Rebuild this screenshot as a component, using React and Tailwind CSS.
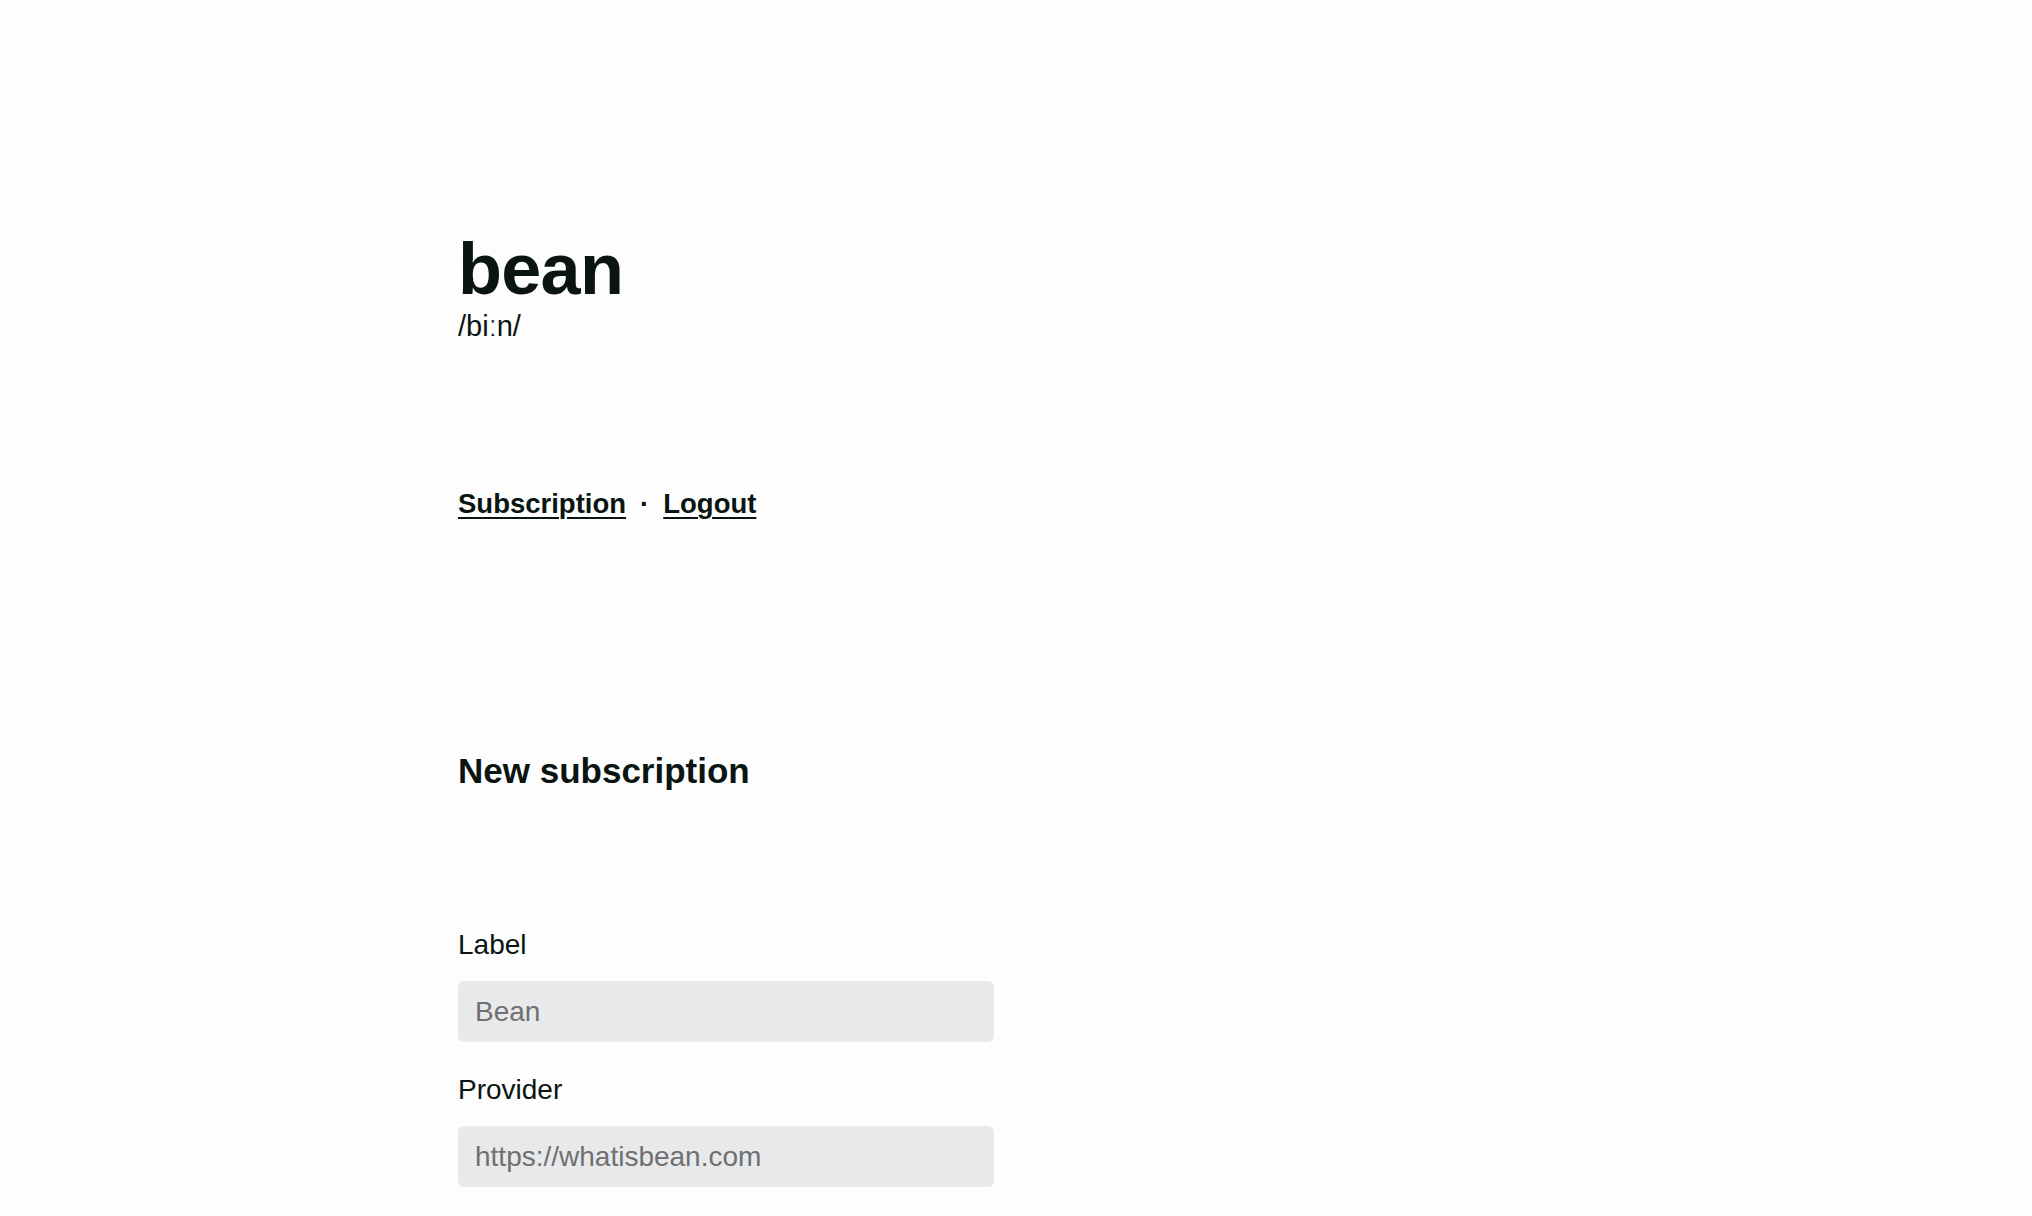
export default function App() {
  return (
    <div className="min-h-[1216px] w-full bg-[#fdfdfd] text-[#0a1512] font-['Liberation_Sans',Arial,sans-serif]">
      <div className="pl-[458px] pt-[233px]">
        <header>
          <h1 className="text-[72px] leading-none font-bold tracking-[-0.01em]">bean</h1>
          <p className="mt-[4px] text-[29px] leading-[35px]">/biːn/</p>
        </header>

        <nav className="mt-[143px] flex items-center text-[27.5px] leading-[33px] font-bold">
          <a href="#" className="underline decoration-2 underline-offset-[4px]">Subscription</a>
          <span className="mx-[14px]">·</span>
          <a href="#" className="underline decoration-2 underline-offset-[4px]">Logout</a>
        </nav>

        <main className="mt-[230px] w-[536px]">
          <h2 className="text-[35px] leading-[42px] font-bold">New subscription</h2>

          <form className="mt-[136px] flex flex-col">
            <label className="text-[28px] leading-[34px]" htmlFor="label">Label</label>
            <input
              id="label"
              placeholder="Bean"
              className="mt-[19px] h-[61px] w-full rounded-[6px] bg-[#e8e9ea] px-[17px] text-[28px] outline-none placeholder:text-[#6f7071]"
            />
            <label className="mt-[31px] text-[28px] leading-[34px]" htmlFor="provider">Provider</label>
            <input
              id="provider"
              placeholder="https://whatisbean.com"
              className="mt-[19px] h-[61px] w-full rounded-[6px] bg-[#e8e9ea] px-[17px] text-[28px] outline-none placeholder:text-[#6f7071]"
            />
          </form>
        </main>
      </div>
    </div>
  );
}
